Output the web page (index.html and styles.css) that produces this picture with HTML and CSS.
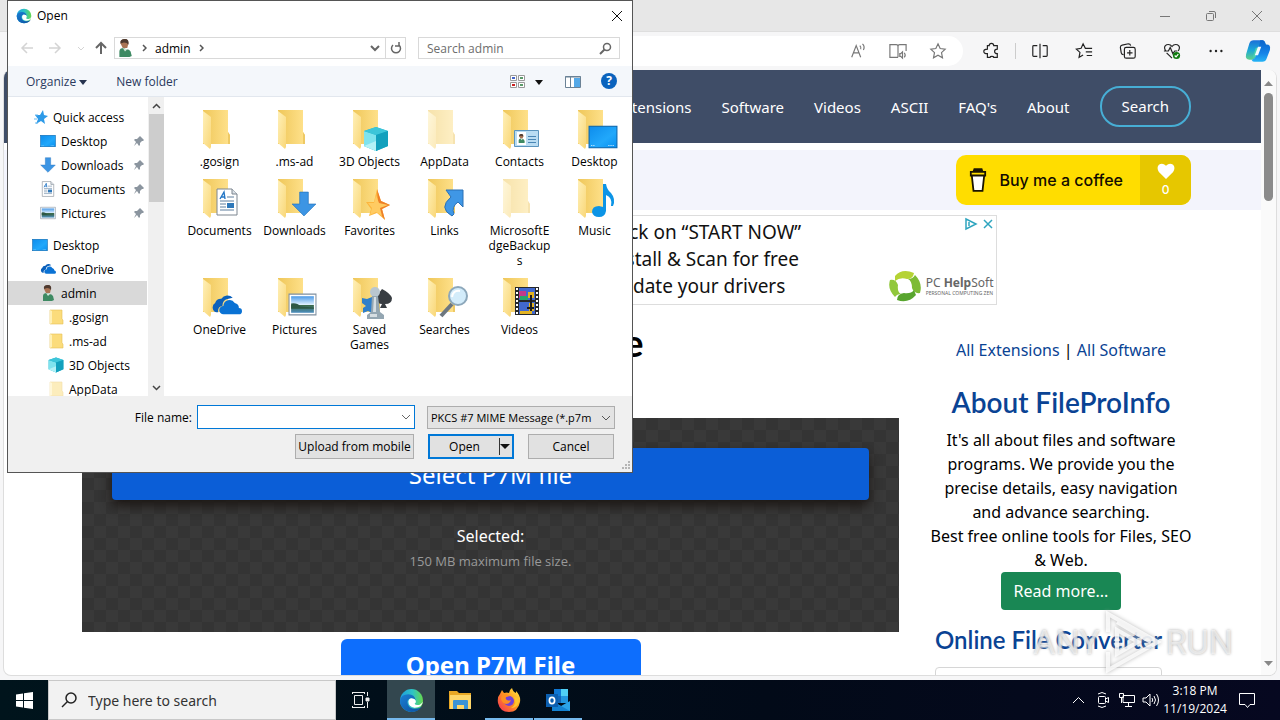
FILE: index.html
```html
<!DOCTYPE html>
<html lang="en">
  <head>
    <meta charset="utf-8">
    <title>P7M File</title>
    <link rel="stylesheet" href="styles.css">
  </head>
  <body>
    <!-- shared icons -->
    <svg class="sprite" aria-hidden="true">
      <defs>
        <linearGradient id="g-flap" x1="0" y1="0" x2="1" y2="1"><stop offset="0" stop-color="#fff0b8"/><stop offset="1" stop-color="#f9d778"/></linearGradient>
        <linearGradient id="g-back" x1="0" y1="0" x2="1" y2="0"><stop offset="0" stop-color="#efc75a"/><stop offset="1" stop-color="#ffe28d"/></linearGradient>
        <linearGradient id="g-screen" x1="0" y1="0" x2="1" y2="1"><stop offset="0" stop-color="#0d8cec"/><stop offset=".6" stop-color="#21a8fb"/><stop offset="1" stop-color="#0890f0"/></linearGradient>
        <linearGradient id="g-edge" x1="0" y1="0" x2="1" y2="0"><stop offset="0" stop-color="#1d9fe0"/><stop offset=".55" stop-color="#2fc3c4"/><stop offset="1" stop-color="#66d94c"/></linearGradient>
        <linearGradient id="g-edge2" x1="0" y1="0" x2="1" y2="1"><stop offset="0" stop-color="#1b7fd3"/><stop offset="1" stop-color="#0c4f9f"/></linearGradient>
        <linearGradient id="g-fox" x1="1" y1="0" x2="0" y2="1"><stop offset="0" stop-color="#fff04a"/><stop offset=".45" stop-color="#ff9a1e"/><stop offset="1" stop-color="#f5285a"/></linearGradient>
        <linearGradient id="g-cop1" x1="0" y1="0" x2="0" y2="1"><stop offset="0" stop-color="#1a6fd8"/><stop offset=".5" stop-color="#1aa7d8"/><stop offset="1" stop-color="#5fd08b"/></linearGradient>
        <linearGradient id="g-cop2" x1="0" y1="0" x2="0" y2="1"><stop offset="0" stop-color="#0b62c9"/><stop offset=".6" stop-color="#1583e8"/><stop offset="1" stop-color="#26b4f5"/></linearGradient>
        <linearGradient id="g-sky" x1="0" y1="0" x2="0" y2="1"><stop offset="0" stop-color="#4c9ae6"/><stop offset=".5" stop-color="#dcefff"/><stop offset=".55" stop-color="#3c6a4a"/><stop offset="1" stop-color="#4d8fc0"/></linearGradient>
      </defs>
      <symbol id="folder" viewBox="0 0 48 48">
        <path d="M7 4h25v22l2 3v9H7z" fill="url(#g-back)"/>
        <path d="M32 26l2 3v9h-2z" fill="#eec964"/>
        <path d="M7 5l8 6v30l-1 2-7-6z" fill="url(#g-flap)"/>
      </symbol>
      <symbol id="folder-small" viewBox="0 0 16 16">
        <path d="M2 1h12v9l1 1v4H2z" fill="#fbdc7b" stroke="#e5bf55" stroke-width=".6"/>
        <path d="M2 1l2 1v12l-2 1z" fill="#fff0b5"/>
      </symbol>
      <symbol id="desktop" viewBox="0 0 28 28">
        <rect x="1" y="4" width="26" height="20" fill="url(#g-screen)" stroke="#0c66ad"/>
        <path d="M3 22h3M19 22h6" stroke="#d8f0ff" stroke-dasharray="1 1"/>
      </symbol>
      <symbol id="down" viewBox="0 0 24 24">
        <path d="M8 1h8v11h7L12 23 1 12h7z" fill="#3c95e4" stroke="#2372bb" stroke-width=".6"/>
      </symbol>
      <symbol id="doc" viewBox="0 0 24 28">
        <path d="M2 1h15l5 5v21H2z" fill="#fff" stroke="#7d8690"/>
        <path d="M17 1v5h5" fill="#dce2e8" stroke="#7d8690"/>
        <path d="M5 11l4-7 1 7M6 9h4" fill="none" stroke="#2376c5" stroke-width="1.4"/>
        <path d="M12 9h7M5 13h14M5 16h6M5 19h6M5 22h14" stroke="#5f7f9e"/>
        <path d="M12 15h7v5h-7z" fill="#2f78b9"/>
      </symbol>
      <symbol id="picture" viewBox="0 0 28 24">
        <path d="M1 2h26v20H1z" fill="#fff" stroke="#7f8f9f"/>
        <path d="M3 4h22v16H3z" fill="url(#g-sky)"/>
        <path d="M3 11q6-1 9 3l13 1v1H3z" fill="#2d5845"/>
      </symbol>
      <symbol id="cube" viewBox="0 0 26 26">
        <path d="M13 1l12 4v15l-12 5-12-5V5z" fill="#1fb4cd"/>
        <path d="M1 5l12 4v16L1 20z" fill="#7fe3ee"/>
        <path d="M13 1l12 4-12 4L1 5z" fill="#3cc5d9"/>
        <path d="M13 9l12-4v15l-12 5z" fill="#12a0bd"/>
        <path d="M1 20l12-5v10z" fill="#b3f1f6"/>
      </symbol>
      <symbol id="cloud" viewBox="0 0 30 20">
        <path d="M5 17a5 5 0 0 1-1-9 6 6 0 0 1 6-4 7 7 0 0 1 11-1l-4 1q-6 1-6 7-5 1-4 6z" fill="#0b60bb"/>
        <path d="M12 19a4 4 0 0 1 0-8 6 6 0 0 1 11-3 5 5 0 0 1 4 5 3 3 0 0 1 0 6z" fill="#0a72d4"/>
      </symbol>
      <symbol id="person" viewBox="0 0 16 16">
        <path d="M4 4q0-4 4-4 3 0 3 4l-1 4H6z" fill="#a97455"/>
        <path d="M4 4q-1-4 4-4 4 0 3 5-1-2-4-2z" fill="#4d3a30"/>
        <path d="M3 16V11q0-3 4-3l2 1q3 0 4 2l1 4-2 1z" fill="#3e8a63"/>
        <path d="M6 8l2 3 2-2" fill="#d5e8dc"/>
      </symbol>
      <symbol id="pin" viewBox="0 0 12 12">
        <path d="M7 1l4 4-1 1-1 0-2 2 0 2-1 1-2-3-3 3 2-4-2-2 1-1h2l2-2z" fill="#8b959f"/>
      </symbol>
      <symbol id="edge" viewBox="0 0 24 24">
        <circle cx="12" cy="12" r="11" fill="url(#g-edge)"/>
        <path d="M1 12q1-6 8-6 6 0 7 6-1-2-4-2-4 0-4 4 1 6 7 6 4 0 7-2-4 5-10 5A11 11 0 0 1 1 12z" fill="url(#g-edge2)"/>
        <path d="M16 12q1 2-1 3 1 2 5 1 2-1 3-3-1 6-8 6-6-1-6-6 1-4 4-3 2 0 3 2z" fill="#fff" class="edge-gap"/>
      </symbol>
    </svg>

    <main class="browser">
      <div class="titlebar">
        <button class="win-btn" aria-label="Minimize"><svg width="12" height="12"><path d="M1 6.5h10"/></svg></button>
        <button class="win-btn" aria-label="Restore"><svg width="12" height="12"><rect x="1.500" y="3.500" width="7" height="7" rx="1"/><path d="M4 1.500h5q1.500 0 1.500 1.500v5"/></svg></button>
        <button class="win-btn" aria-label="Close"><svg width="12" height="12"><path d="M1 1l10 10M11 1L1 11"/></svg></button>
      </div>
      <div class="toolbar">
        <div class="address">
          <button class="addr-btn" aria-label="Read aloud"><svg viewBox="0 0 20 20"><path d="M3 17L8 4l5 13M5 12h6M12 4q2 2 1 4M15 2q3 3 1 7"/></svg></button>
          <button class="addr-btn" aria-label="Immersive reader"><svg viewBox="0 0 20 20"><path d="M10 17H1V3h7q2 0 2 2v12M10 5q0-2 2-2h7v7M12 13h1l2-2v7l-2-2h-1zM17 12q2 3 0 5"/></svg></button>
          <button class="addr-btn" aria-label="Add to favorites"><svg viewBox="0 0 20 20"><path d="M10 2l2.400 5.200 5.600.7-4.100 3.900 1.100 5.700-5-2.800-5 2.800 1.100-5.700L2 7.900l5.600-.7z"/></svg></button>
        </div>
        <button class="tool-btn" aria-label="Extensions"><svg viewBox="0 0 20 20"><path d="M6 4h2q0-2.500 2.500-2.500T13 4h4v4q-3 0-3 2.500t3 2.500v4h-4q0-1-2-1t-2 1H6v-4q-4 0-4-2.500T6 8z"/></svg></button>
        <span class="divider"></span>
        <button class="tool-btn" aria-label="Split screen"><svg viewBox="0 0 20 20"><path d="M7 4H3q-1 0-1 1v10q0 1 1 1h4M13 4h4q1 0 1 1v10q0 1-1 1h-4M10 2v16"/></svg></button>
        <button class="tool-btn" aria-label="Favorites"><svg viewBox="0 0 20 20"><path d="M12 7h-.5L9 2 6.800 7 1.500 8l4 3.500L4.500 17 9 14.500M12 7h7M12 11h7M13 15h6"/></svg></button>
        <button class="tool-btn" aria-label="Collections"><svg viewBox="0 0 20 20"><path d="M5 14q-2 0-2.500-2L1.500 6q0-2 2-2.500l7-1.500q2 0 2.500 2M8 6h8q2 0 2 2v8q0 2-2 2H8q-2 0-2-2V8q0-2 2-2zM12 9v6M9 12h6"/></svg></button>
        <button class="tool-btn" aria-label="Browser essentials"><svg viewBox="0 0 20 20"><path d="M3 10Q0 5 4 3q4-1 6 2 2-3 6-2 4 2 1 7M1 10h5l2-4 3 7 2-3h3M4 12l6 6"/><circle class="ok" cx="15" cy="15" r="4"/><path class="tick" d="M13 15l1.500 1.500L17 13.500"/></svg></button>
        <button class="tool-btn" aria-label="More"><svg viewBox="0 0 20 20"><g class="dots"><circle cx="4" cy="10" r="1.300"/><circle cx="10" cy="10" r="1.300"/><circle cx="16" cy="10" r="1.300"/></g></svg></button>
        <button class="copilot" aria-label="Copilot"><svg viewBox="0 0 24 24"><path d="M8 2h8q2 0 3 3l1 3h-4q-3 0-4 3l-2 6q-1 3-4 3H4q-4 0-3-5L4 5q1-3 4-3z" fill="url(#g-cop1)"/><path d="M14 2h2q2 0 3 4h1q4 0 3 5l-3 8q-1 3-4 3H9q-2 0-3-2 3 0 4-4l3-9q1-3 1-5z" fill="url(#g-cop2)"/><path d="M10 9h3l-3 8q-1 2-3 1z" fill="#48d0b0"/><path d="M12 8h3l-3 8H9z" fill="#f3fbff"/></svg></button>
      </div>

      <div class="viewport">
        <div class="page">
          <header class="site-header">
            <nav>
              <a href="#">Extensions</a>
              <a href="#">Software</a>
              <a href="#">Videos</a>
              <a href="#">ASCII</a>
              <a href="#">FAQ's</a>
              <a href="#">About</a>
            </nav>
            <a class="search-link" href="#">Search</a>
          </header>
          <div class="support-bar">
            <a class="coffee" href="#">
              <span class="coffee-main">
                <svg viewBox="0 0 20 28" width="18" height="26"><path d="M3 8l2 18h10l2-18z" fill="#fff" stroke="#1a1400" stroke-width="2"/><path d="M2 5h16v4H2zM5 5l1-3h8l1 3M5 3h9" fill="#fd0" stroke="#1a1400" stroke-width="2"/></svg>
                Buy me a coffee
              </span>
              <span class="coffee-count">
                <svg viewBox="0 0 20 18" width="18" height="16"><path d="M10 18L2 10Q-1 5 2 2q4-3 8 1 4-4 8-1 3 3 0 8z" fill="#fff"/></svg>
                0
              </span>
            </a>
          </div>
          <a class="ad" href="#">
            <span class="ad-steps">
              <span>1. Click on “START NOW”</span>
              <span>2. Install &amp; Scan for free</span>
              <span>3. Update your drivers</span>
            </span>
            <span class="ad-side">
              <svg width="30" height="14" viewBox="0 0 30 14" fill="none" stroke="#2fa5bf" stroke-width="1.500"><path d="M2 2l10 5-10 5zM5 5v4"/><path d="M20 3l8 8M28 3l-8 8"/></svg>
              <span class="ad-brand">
                <svg width="34" height="34" viewBox="0 0 34 34"><path d="M7 7Q14-1 26 4q-1 6-7 6-7-2-12 2z" fill="#b5d334"/><path d="M27 6q8 8 5 18-6 1-8-5 0-7-4-9 5 0 7-4z" fill="#7dbb35"/><path d="M28 26q-8 9-19 5 0-6 7-7 7 1 10-3 1 3 2 5z" fill="#58a52e"/><path d="M7 28q-8-8-5-17 6-1 8 5-1 7 3 9-4 0-6 3z" fill="#91c83c"/></svg>
                <span class="brand-text"><span>PC <b>Help</b>Soft</span><small>PERSONAL COMPUTING ZEN</small></span>
              </span>
            </span>
          </a>
          <div class="columns">
            <section class="converter">
              <h1>Open P7M Online</h1>
              <div class="dropzone">
                <button class="select-file">Select P7M file</button>
                <p>Selected:</p>
                <small>150 MB maximum file size.</small>
              </div>
              <button class="open-file">Open P7M File</button>
            </section>
            <aside>
              <p class="links"><a href="#">All Extensions</a> | <a href="#">All Software</a></p>
              <h2>About FileProInfo</h2>
              <p>It's all about files and software programs. We provide you the precise details, easy navigation and advance searching.<br>Best free online tools for Files, SEO &amp; Web.</p>
              <a class="read-more" href="#">Read more...</a>
              <h3>Online File Converter</h3>
              <div class="card"></div>
            </aside>
          </div>
        </div>
        <div class="page-scroll">
          <svg width="9" height="5"><path d="M0 5l4.500-5L9 5z"/></svg>
          <span class="thumb"></span>
          <svg width="9" height="5"><path d="M0 0l4.500 5L9 0z"/></svg>
        </div>
      </div>
    </main>

    <div class="watermark">
      <span>ANY</span>
      <svg width="58" height="64" viewBox="0 0 58 64"><path d="M4 22V4l50 28L4 60V42M13 20v24l21-12zM13 12l34 20"/></svg>
      <span>RUN</span>
    </div>

    <!-- file picker -->
    <form class="dialog" role="dialog" aria-label="Open">
      <div class="dialog-title">
        <svg width="16" height="16"><use href="#edge"/></svg>
        <span>Open</span>
        <button type="button" aria-label="Close"><svg width="12" height="12"><path d="M1 1l10 10M11 1L1 11" stroke="#111"/></svg></button>
      </div>
      <div class="nav-row">
        <button type="button" class="nav-btn" aria-label="Back"><svg width="14" height="12"><path d="M13 6H2M7 1L2 6l5 5" stroke="#d4d4d4" stroke-width="1.500"/></svg></button>
        <button type="button" class="nav-btn" aria-label="Forward"><svg width="14" height="12"><path d="M1 6h11M7 1l5 5-5 5" stroke="#d4d4d4" stroke-width="1.500"/></svg></button>
        <button type="button" class="nav-btn recent" aria-label="Recent locations"><svg width="6" height="5"><path d="M0 1l3 3 3-3" stroke="#d4d4d4"/></svg></button>
        <button type="button" class="nav-btn up" aria-label="Up"><svg width="12" height="14"><path d="M6 13V2M1 7l5-5 5 5" stroke="#666" stroke-width="2"/></svg></button>
        <div class="path">
          <svg width="18" height="18"><use href="#person"/></svg>
          <svg class="crumb" width="5" height="8"><path d="M1 1l3 3-3 3" stroke="#555" stroke-width="1.500"/></svg>
          <span>admin</span>
          <svg class="crumb" width="5" height="8"><path d="M1 1l3 3-3 3" stroke="#555" stroke-width="1.500"/></svg>
          <button type="button" class="path-drop" aria-label="Previous locations"><svg width="10" height="7"><path d="M1 1l4 4 4-4" stroke="#666" stroke-width="2"/></svg></button>
          <button type="button" class="path-reload" aria-label="Refresh"><svg width="12" height="12"><path d="M9 3a4.500 4.500 0 1 1-6 0M3 0v4h4" stroke="#666" stroke-width="1.500" transform="matrix(-1 0 0 1 12 0)"/></svg></button>
        </div>
        <label class="search-box">
          <input type="text" placeholder="Search admin" aria-label="Search admin">
          <svg width="13" height="13"><circle cx="8" cy="5" r="3.500" stroke="#666" stroke-width="1.500"/><path d="M5.500 7.500L1 12" stroke="#666" stroke-width="2"/></svg>
        </label>
      </div>
      <div class="command-bar">
        <button type="button" class="organize">Organize <svg width="8" height="5"><path d="M0 0h8L4 5z" fill="#26334f"/></svg></button>
        <button type="button">New folder</button>
        <span class="command-right">
          <button type="button" aria-label="Change your view"><svg width="16" height="14"><path d="M.5.5h6v5h-6zM8.500.5h6v5h-6zM.5 7.500h6v5h-6zM8.500 7.500h6v5h-6z" fill="#fff" stroke="#9a9a9a"/><path d="M2 3h3" stroke="#4466cc" stroke-width="2"/><path d="M10 3h3M10 10h3" stroke="#5a9a6a" stroke-width="2"/><path d="M2 10h3" stroke="#c22" stroke-width="2"/></svg></button>
          <button type="button" aria-label="More views"><svg width="8" height="5"><path d="M0 0h8L4 5z" fill="#111"/></svg></button>
          <button type="button" aria-label="Preview pane"><svg width="16" height="12"><path d="M.5.5h15v11H.5z" fill="#fff" stroke="#6b8296"/><path d="M9 2h6v9H9z" fill="#55a9e8"/><path d="M0 1h16M5.500 1v10" stroke="#6b8296"/></svg></button>
          <button type="button" class="help" aria-label="Help">?</button>
        </span>
      </div>
      <div class="dialog-body">
        <div class="tree">
          <ul>
            <li><svg><path d="M11 1l1 5 4 1-4 3 1 5-4-3-5 3 2-5-3-4 5 0z" fill="#2d9ae8"/><path d="M3 6h3M2 10h3M3 14h3" stroke="#6bb9ef"/></svg>Quick access</li>
            <li class="l2"><svg><use href="#desktop"/></svg>Desktop<svg class="pin"><use href="#pin"/></svg></li>
            <li class="l2"><svg><use href="#down"/></svg>Downloads<svg class="pin"><use href="#pin"/></svg></li>
            <li class="l2"><svg><use href="#doc"/></svg>Documents<svg class="pin"><use href="#pin"/></svg></li>
            <li class="l2"><svg><use href="#picture"/></svg>Pictures<svg class="pin"><use href="#pin"/></svg></li>
            <li class="root"><svg><use href="#desktop"/></svg>Desktop</li>
            <li class="l2"><svg><use href="#cloud"/></svg>OneDrive</li>
            <li class="l2 selected"><svg><use href="#person"/></svg>admin</li>
            <li class="l3"><svg><use href="#folder-small"/></svg>.gosign</li>
            <li class="l3"><svg><use href="#folder-small"/></svg>.ms-ad</li>
            <li class="l3"><svg><use href="#cube"/></svg>3D Objects</li>
            <li class="l3"><svg class="faded"><use href="#folder-small"/></svg>AppData</li>
          </ul>
          <div class="tree-scroll">
            <svg width="9" height="6"><path d="M1 5l3.500-3.500L8 5"/></svg>
            <span class="thumb"></span>
            <svg width="9" height="6"><path d="M1 1l3.500 3.500L8 1"/></svg>
          </div>
        </div>
        <ul class="files">
          <li><svg viewBox="0 0 48 48"><use href="#folder"/></svg>.gosign</li>
          <li><svg viewBox="0 0 48 48"><use href="#folder"/></svg>.ms-ad</li>
          <li><svg viewBox="0 0 48 48"><use href="#folder"/><use href="#cube" x="17" y="20" width="26" height="26"/></svg>3D Objects</li>
          <li><svg viewBox="0 0 48 48" class="faded"><use href="#folder"/></svg>AppData</li>
          <li><svg viewBox="0 0 48 48"><use href="#folder"/><path d="M18.500 24.500h24v16h-24z" fill="#b9dcf2" stroke="#5b94bd"/><path d="M21 26h9v13h-9z" fill="#fff"/><use href="#person" x="21" y="27" width="9" height="11"/><path d="M32 30.500h8M32 33.500h8M32 36.500h8" stroke="#4a86b5"/></svg>Contacts</li>
          <li><svg viewBox="0 0 48 48"><use href="#folder"/><use href="#desktop" x="17" y="16" width="30" height="30"/></svg>Desktop</li>
          <li><svg viewBox="0 0 48 48"><use href="#folder"/><use href="#doc" x="19" y="12" width="24" height="30"/></svg>Documents</li>
          <li><svg viewBox="0 0 48 48"><use href="#folder"/><use href="#down" x="20" y="16" width="26" height="26"/></svg>Downloads</li>
          <li><svg viewBox="0 0 48 48"><use href="#folder"/><path d="M31 14l4 12 9 4-8 4 3 11-8-7-8 3 2-7-5-7 8 0z" fill="#fcb63e"/><path d="M31 14l4 12 9 4-8 4 3 11-6-8-1-10z" fill="#ee7f27"/><path d="M30 20l3 8 9 2-8 3 2 8-6-4-6 3 2-7-4-5 6 0z" fill="#ffcb62"/></svg>Favorites</li>
          <li><svg viewBox="0 0 48 48"><use href="#folder"/><path d="M25 15h17v17l-5-5q-7 5-4 12l-2 2q-14-8-1-19z" fill="#3f97e6" stroke="#2b71b6"/></svg>Links</li>
          <li><svg viewBox="0 0 48 48" class="faded"><use href="#folder"/></svg>MicrosoftE<br>dgeBackup<br>s</li>
          <li><svg viewBox="0 0 48 48"><use href="#folder"/><path d="M32 9h3q1 6 5 9 5 6 2 13h-2q2-8-5-11v16q-1 6-7 6t-7-5q0-6 7-6l4 1z" fill="#0c94e6"/></svg>Music</li>
          <li><svg viewBox="0 0 48 48"><use href="#folder"/><use href="#cloud" x="15" y="20" width="31" height="22"/></svg>OneDrive</li>
          <li><svg viewBox="0 0 48 48"><use href="#folder"/><use href="#picture" x="17" y="18" width="29" height="25"/></svg>Pictures</li>
          <li><svg viewBox="0 0 48 48"><use href="#folder"/><path d="M36 15q-4 4-5 9 0 6 5 6l-2 4h7l-2-4q7 0 7-6-2-5-10-9z" fill="#383d42"/><path d="M16 24l5 1 5-2v16l-4-2-5 2v-5l3-2-4-3z" fill="#2f7fca"/><circle cx="29" cy="18" r="5" fill="#b9c6cf"/><path d="M26 22h6l2 16 4 3v4H21v-4l4-3z" fill="#94a6b2"/><path d="M28 23h2v15h-3zM24 40h7v3h-7z" fill="#d6dee3"/></svg>Saved Games</li>
          <li><svg viewBox="0 0 48 48"><use href="#folder"/><path d="M31 30L20 42" stroke="#6d7780" stroke-width="4"/><circle cx="37" cy="22" r="9" fill="#d3ecfa" stroke="#8da8bb" stroke-width="2"/><path d="M31 23q1-7 8-6" stroke="#fff" stroke-width="2" fill="none"/></svg>Searches</li>
          <li><svg viewBox="0 0 48 48"><use href="#folder"/><path d="M19 13h24v28H19z" fill="#26282b"/><path d="M23 14h16v12H23zM23 28h16v12H23z" fill="#4168cf"/><path d="M23 17h7v7h-7z" fill="#c23b8b"/><path d="M24 22h8v4h-8z" fill="#27a66c"/><path d="M32 18h6v6h-6zM33 29h5v8h-5zM24 37h12v3H24z" fill="#e3b322"/><path d="M35 21v16M31 34h7" stroke="#1c1c1c" stroke-width="2"/><path d="M21 14v27M41 14v27" stroke="#fff" stroke-width="2" stroke-dasharray="2 2"/></svg>Videos</li>
        </ul>
      </div>
      <div class="dialog-footer">
        <div class="name-row">
          <label for="file-name">File name:</label>
          <span class="combo">
            <input type="text" id="file-name">
            <svg width="10" height="7"><path d="M1 1l4 4 4-4" stroke="#666"/></svg>
          </span>
          <span class="type">
            <select aria-label="File type"><option>PKCS #7 MIME Message (*.p7m</option></select>
            <svg width="10" height="7"><path d="M1 1l4 4 4-4" stroke="#555"/></svg>
          </span>
        </div>
        <div class="button-row">
          <button type="button" class="upload">Upload from mobile</button>
          <span class="split">
            <button type="button">Open</button>
            <button type="button" class="arrow" aria-label="Open options"><svg width="10" height="5"><path d="M0 0h10L5 5z" fill="#111"/></svg></button>
          </span>
          <button type="button" class="cancel">Cancel</button>
        </div>
        <svg class="grip" width="10" height="10"><path d="M8 2h2M5 5h2M8 5h2M2 8h2M5 8h2M8 8h2" stroke="#b5b5b5" stroke-width="2"/></svg>
      </div>
    </form>

    <footer class="taskbar">
      <button class="start" aria-label="Start"><svg width="17" height="17"><path d="M0 2.500l7-1v6.500H0zM8 1.300l9-1.300v8H8zM0 9h7v6.500l-7-1zM8 9h9v8l-9-1.300z" fill="#fff"/></svg></button>
      <label class="task-search">
        <svg width="18" height="18"><circle cx="11" cy="7" r="5" stroke="#222" stroke-width="1.500"/><path d="M7.500 10.500L2 16" stroke="#222" stroke-width="1.500"/></svg>
        <input type="text" placeholder="Type here to search" aria-label="Type here to search">
      </label>
      <button class="task" aria-label="Task view"><svg width="18" height="18" fill="none" stroke="#eee"><path d="M1 1.500h11M1 16.500h11M2.500 4.500h8v9h-8zM.500 1v2M12.500 1v2M.500 15v2M12.500 15v2M15.500 1v4M15.500 11v6"/><path d="M14 7h3v3h-3z" fill="#eee"/></svg></button>
      <button class="task active" aria-label="Microsoft Edge"><svg width="25" height="25"><use href="#edge"/></svg></button>
      <button class="task" aria-label="File Explorer"><svg width="23" height="20" viewBox="0 0 23 20"><path d="M0 1h8l2 2h12v16H0z" fill="#e9a825"/><path d="M1 5h21v14H1z" fill="#ffd76a"/><path d="M4 11q0-1 1-1h13q1 0 1 1v8h-4v-4H8v4H4z" fill="#3a93d6"/></svg></button>
      <button class="task open" aria-label="Firefox"><svg width="24" height="24" viewBox="0 0 24 24"><path d="M3 6l2-4 2 3q3-1 5 0 0-3 3-5 1 4 4 5 0-1 0-2 5 5 4 11-2 10-11 10T1 15Q0 9 3 6z" fill="url(#g-fox)"/><circle cx="12" cy="13" r="5" fill="#7141d8"/><path d="M5 7q5-2 8 1l-4 1q-1 2 1 3 2 1 4 0-1 4-5 4-4-1-5-5z" fill="#ff8f22"/><path d="M17 9q4 7-3 11 7 0 8-7-1-4-5-4z" fill="#ffc62c"/></svg></button>
      <button class="task open" aria-label="Outlook"><svg width="24" height="22" viewBox="0 0 24 22"><path d="M8 0h14v14H8z" fill="#1466b8"/><path d="M15 0h7v7h-7z" fill="#50d0f5"/><path d="M8 0h7v7H8z" fill="#0f78d4"/><path d="M15 7h7v7h-7z" fill="#2397e0"/><path d="M6 12l9 5 9-5v10H6z" fill="#2ba3e8"/><path d="M6 12l18 10H6z" fill="#1482d2"/><path d="M0 5h12v13H0z" fill="#0c5fb0"/><ellipse cx="6" cy="11.500" rx="2.600" ry="3.200" fill="none" stroke="#fff" stroke-width="1.700"/></svg></button>
      <div class="tray">
        <svg><path d="M3 12l5.500-5.500L14 12"/></svg>
        <svg><rect x="4.500" y="5.500" width="7" height="7" rx="1"/><path d="M11.500 8l3-1.500v5l-3-1.500M4 3q4-3 8 0M4 15q4 3 8 0"/></svg>
        <svg><path d="M5 4.500h11.500v7H5zM10.500 12v3.500M7 15.500h7M1.500 2.500h4v4h-4zM3.500 7v5"/></svg>
        <svg><path d="M1 7h3l4-4v12l-4-4H1zM10 7q1.500 2 0 4M12 5q3 4 0 8M14.500 3q4 6 0 12"/></svg>
        <time>3:18 PM<br>11/19/2024</time>
        <button aria-label="Notifications"><svg><path d="M1.500 2.500h15v11H12l-2.500 3-2.500-3H1.500z"/></svg></button>
      </div>
    </footer>
  </body>
</html>
```

FILE: styles.css
```css
* {
  box-sizing: border-box;
}
body {
  margin: 0;
  height: 100vh;
  display: flex;
  flex-direction: column;
  overflow: hidden;
  position: relative;
  font-family: "Noto Sans", "Open Sans", sans-serif;
  font-size: 16px;
  color: #000;
}
button,
input,
select {
  font: inherit;
  color: inherit;
}
button {
  border: none;
  background: none;
  padding: 0;
}
a {
  text-decoration: none;
}
ul {
  list-style: none;
  margin: 0;
  padding: 0;
}
.sprite {
  position: absolute;
  width: 0;
  height: 0;
}

/* browser */
.browser {
  flex: 1;
  min-height: 0;
  display: flex;
  flex-direction: column;
  background: #f6f6f7;
}
.titlebar {
  height: 32px;
  background: #e7e7e7;
  display: flex;
  justify-content: flex-end;
  border-bottom: 1px solid #dedede;
}
.win-btn {
  width: 46px;
}
.win-btn svg {
  fill: none;
  stroke: #777;
}
.toolbar {
  height: 38px;
  display: flex;
  align-items: center;
}
.address {
  flex: 1;
  height: 30px;
  margin: 0 6px 0 40px;
  padding-right: 5px;
  border-radius: 15px;
  background: #fff;
  display: flex;
  justify-content: flex-end;
}
.addr-btn,
.tool-btn,
.copilot {
  display: flex;
  align-items: center;
  justify-content: center;
}
.addr-btn {
  width: 40px;
}
.tool-btn {
  width: 44px;
}
.addr-btn svg,
.tool-btn svg {
  width: 18px;
  height: 18px;
  fill: none;
  stroke: #222;
  stroke-width: 1.3;
}
.addr-btn svg {
  stroke: #777;
}
.tool-btn .dots {
  fill: #222;
  stroke: none;
}
.tool-btn .ok {
  fill: #0f7b0f;
  stroke: none;
}
.tool-btn .tick {
  stroke: #fff;
}
.divider {
  width: 1px;
  height: 16px;
  margin: 0 2px;
  background: #ccc;
}
.copilot {
  width: 40px;
  margin-right: 2px;
}
.copilot svg {
  width: 26px;
  height: 26px;
}
.viewport {
  flex: 1;
  min-height: 0;
  margin: 0 3px 4px;
  display: flex;
  border: 1px solid #ddd;
  border-top: none;
  border-radius: 8px;
  overflow: hidden;
  background: #fff;
}
.page {
  flex: 1;
  overflow: hidden;
}
.page-scroll {
  width: 15px;
  padding: 11px 0 9px;
  display: flex;
  flex-direction: column;
  align-items: center;
  background: #fafafa;
}
.page-scroll svg {
  fill: #888;
}
.page-scroll .thumb {
  width: 9px;
  height: 108px;
  margin: 7px 0 auto;
  border-radius: 5px;
  background: #8b8b8b;
}

/* site */
.site-header {
  height: 73px;
  padding: 0 70px 0 78px;
  display: flex;
  align-items: center;
  justify-content: flex-end;
  gap: 30px;
  background: #3f4d67;
  font-size: 15px;
}
.site-header nav {
  display: flex;
  gap: 30px;
}
.site-header a {
  color: #fff;
}
.site-header .search-link {
  padding: 8px 20px;
  line-height: 21px;
  border: 2px solid #47aed5;
  border-radius: 20px;
}
.support-bar {
  margin: 7px 0 5px;
  padding: 5px 70px;
  display: flex;
  justify-content: flex-end;
  background: #f3f4fc;
}
.coffee {
  height: 50px;
  display: flex;
  border-radius: 10px;
  overflow: hidden;
  background: #fd0;
  color: #120c00;
  font-family: Inter, sans-serif;
  font-weight: 500;
}
.coffee-main {
  padding: 0 17px 0 13px;
  display: flex;
  align-items: center;
  gap: 12px;
}
.coffee-count {
  width: 51px;
  display: flex;
  flex-direction: column;
  align-items: center;
  justify-content: center;
  gap: 3px;
  background: #e6c700;
  color: #fff;
  font-size: 12px;
  line-height: 16px;
}
.ad {
  width: 728px;
  height: 90px;
  margin: 0 auto;
  display: flex;
  justify-content: space-between;
  border: 1px solid #ddd;
  color: #111;
}
.ad-steps {
  padding: 3px 0 0 317px;
  display: flex;
  flex-direction: column;
  white-space: nowrap;
  font-size: 19px;
  line-height: 27px;
}
.ad-side {
  padding: 1px 2px 1px 0;
  display: flex;
  flex-direction: column;
  align-items: flex-end;
  justify-content: space-between;
}
.ad-brand {
  display: flex;
  align-items: center;
  gap: 4px;
}
.brand-text {
  display: flex;
  flex-direction: column;
  white-space: nowrap;
  color: #666;
  font-size: 12px;
  line-height: 14px;
}
.brand-text small {
  font-size: 5px;
  line-height: 6px;
}
.columns {
  padding: 19px 69px 0 78px;
  display: flex;
  gap: 31px;
}
.converter {
  flex: 1;
  display: flex;
  flex-direction: column;
  align-items: center;
}
h1 {
  margin: 0 0 58px;
  font-size: 38px;
  line-height: 36px;
  font-family: Lato, sans-serif;
}
.dropzone {
  align-self: stretch;
  height: 214px;
  margin-bottom: 7px;
  padding: 30px;
  text-align: center;
  color: #fff;
  background: repeating-conic-gradient(#343434 0 25%, #393939 0 50%) 0 0 / 24px 24px;
}
.select-file {
  width: 100%;
  height: 52px;
  border-radius: 4px;
  background: #0b5ed7;
  box-shadow: 0 6px 12px #1c1714;
  font-size: 24px;
}
.dropzone p {
  margin: 25px 0 2px;
}
.dropzone small {
  font-family: "Open Sans", sans-serif;
  font-size: 13px;
  color: #999;
}
.open-file {
  width: 300px;
  height: 50px;
  border-radius: 6px;
  background: #0d6efd;
  color: #fff;
  font-size: 24px;
  font-weight: bold;
}
aside {
  width: 262px;
  padding-top: 14px;
  text-align: center;
  line-height: 24px;
}
aside p {
  margin: 0;
}
aside a {
  color: #0a4394;
}
aside h2,
aside h3 {
  font-family: Lato, sans-serif;
  font-weight: 600;
  color: #0a4394;
}
aside h2 {
  margin: 24px 0 9px;
  font-size: 28px;
  line-height: 33px;
}
aside h3 {
  margin: 14px 0 11px 5px;
  text-align: left;
  font-size: 24px;
  line-height: 32px;
}
aside .read-more {
  display: inline-block;
  padding: 7px 13px;
  border-radius: 4px;
  background: #198754;
  color: #fff;
}
.card {
  width: 227px;
  height: 40px;
  margin-left: 5px;
  border: 1px solid #d6d6d6;
  border-radius: 4px;
}
.watermark {
  position: absolute;
  right: 47px;
  bottom: 46px;
  display: flex;
  align-items: center;
  gap: 4px;
  font-family: Roboto, sans-serif;
  font-size: 34px;
  color: #fff9;
  text-shadow: 0 0 3px #aaa;
}
.watermark svg {
  fill: none;
  stroke: #fffc;
  stroke-width: 4;
  filter: drop-shadow(0 0 2px #aaa);
}

/* open dialog */
.dialog {
  position: absolute;
  left: 7px;
  top: 0;
  width: 626px;
  height: 473px;
  display: flex;
  flex-direction: column;
  border: 1px solid #555;
  background: #fff;
  font-family: "Open Sans", "Noto Sans", sans-serif;
  font-size: 12px;
}
.dialog svg {
  fill: none;
  flex: none;
}
.dialog-title {
  height: 29px;
  padding: 0 9px 0 8px;
  display: flex;
  align-items: center;
  gap: 5px;
}
.dialog-title button {
  margin-left: auto;
}
.dialog-title button svg,
.nav-row button svg {
  display: block;
}
.nav-row {
  height: 36px;
  padding: 0 12px;
  display: flex;
  align-items: center;
}
.nav-btn {
  width: 28px;
}
.nav-btn.recent {
  width: 16px;
  padding-left: 2px;
}
.nav-btn.up {
  width: 22px;
  padding-left: 3px;
}
.path {
  flex: 1;
  height: 22px;
  padding-left: 1px;
  display: flex;
  align-items: center;
  border: 1px solid #d9d9d9;
}
.path .crumb {
  margin: 0 8px;
}
.path button {
  display: flex;
  align-items: center;
  justify-content: center;
  width: 20px;
  height: 20px;
}
.path-drop {
  margin-left: auto;
}
.path .path-reload {
  border-left: 1px solid #d9d9d9;
}
.search-box {
  width: 202px;
  height: 22px;
  margin-left: 12px;
  padding: 0 7px 0 8px;
  display: flex;
  align-items: center;
  border: 1px solid #d9d9d9;
}
.search-box input,
.task-search input {
  flex: 1;
  min-width: 0;
  padding: 0;
  border: none;
  outline: none;
  background: none;
}
.search-box input::placeholder {
  color: #6d6d6d;
}
.command-bar {
  height: 31px;
  padding: 0 15px 0 18px;
  display: flex;
  align-items: center;
  gap: 29px;
  border-bottom: 1px solid #e2e7ee;
  background: #f4f7fb;
  color: #2b3a5e;
}
.command-bar button svg {
  vertical-align: middle;
}
.command-right {
  margin-left: auto;
  display: flex;
  align-items: center;
  gap: 20px;
}
.command-right button:nth-child(2) {
  margin: 0 2px 0 -11px;
}
.help {
  width: 16px;
  height: 16px;
  border-radius: 50%;
  background: #0b63bd;
  color: #fff;
  font-weight: bold;
  line-height: 16px;
}
.dialog-body {
  flex: 1;
  min-height: 0;
  display: flex;
  overflow: hidden;
}
.tree {
  width: 156px;
  display: flex;
}
.tree ul {
  flex: 1;
  padding-top: 8px;
}
.tree li {
  height: 24px;
  margin-right: 1px;
  padding: 0 2px 0 24px;
  display: flex;
  align-items: center;
  gap: 5px;
  white-space: nowrap;
}
.tree li.root {
  margin-top: 8px;
}
.tree li.l2 {
  padding-left: 32px;
}
.tree li.l3 {
  padding-left: 40px;
}
.tree li svg {
  width: 16px;
  height: 16px;
}
.tree li .pin {
  width: 12px;
  height: 12px;
  margin-left: auto;
}
.tree .selected {
  background: #d9d9d9;
}
.faded {
  opacity: .5;
}
.tree-scroll {
  width: 16px;
  padding: 6px 0 5px;
  display: flex;
  flex-direction: column;
  align-items: center;
  background: #f0f0f0;
}
.tree-scroll svg {
  stroke: #444;
  stroke-width: 1.5;
}
.tree-scroll .thumb {
  width: 15px;
  height: 88px;
  margin: 5px 0 auto;
  background: #cdcdcd;
}
.files {
  flex: 1;
  padding: 9px 0 0 18px;
  display: grid;
  grid-template-columns: repeat(6, 1fr);
  align-content: start;
  row-gap: 6px;
  line-height: 15px;
  text-align: center;
}
.files li {
  padding: 0 4px;
}
.files svg {
  display: block;
  width: 48px;
  height: 48px;
  margin: 0 auto;
}
.dialog-footer {
  position: relative;
  height: 76px;
  padding: 9px 17px 0 8px;
  background: #f0f0f0;
}
.name-row,
.button-row {
  display: flex;
  justify-content: flex-end;
  align-items: center;
}
.combo,
.type {
  position: relative;
  display: flex;
}
.combo {
  width: 218px;
  height: 24px;
  margin: 0 12px 0 5px;
}
.combo input {
  width: 100%;
  padding: 0 20px 0 4px;
  border: 1px solid #0078d7;
  background: #fff;
}
.type {
  width: 188px;
  height: 23px;
}
.type select {
  width: 100%;
  padding: 0 14px 0 3px;
  appearance: none;
  border: 1px solid #adadad;
  border-radius: 0;
  background: #e3e3e3;
  font-size: 11px;
}
.combo svg,
.type svg {
  position: absolute;
  right: 4px;
  top: 9px;
}
.button-row {
  margin: 5px 1px 0 0;
}
.button-row > button,
.split {
  height: 25px;
  border: 1px solid #adadad;
  background: #e1e1e1;
}
.upload {
  width: 119px;
}
.cancel {
  width: 86px;
}
.split {
  width: 86px;
  margin: 0 14px;
  display: flex;
  align-items: center;
  border: 2px solid #0078d7;
}
.split button {
  flex: 1;
  height: 17px;
  line-height: 17px;
}
.split .arrow {
  flex: none;
  width: 13px;
  border-left: 1px solid #333;
  display: flex;
  align-items: center;
}
.grip {
  position: absolute;
  right: 2px;
  bottom: 2px;
}

/* taskbar */
.taskbar {
  height: 40px;
  display: flex;
  background: linear-gradient(90deg, #00141c, #020a18 60%, #060820);
}
.start {
  width: 48px;
}
.start svg {
  display: block;
  margin: 0 auto;
}
.task-search {
  width: 288px;
  padding: 0 11px;
  display: flex;
  align-items: center;
  gap: 10px;
  border: 1px solid #c8c8c8;
  background: #f2f2f2;
  font-size: 14px;
}
.task-search svg {
  fill: none;
}
.task-search input::placeholder {
  color: #333;
}
.task {
  width: 48px;
  margin-right: 1px;
  padding-top: 2px;
  display: flex;
  align-items: center;
  justify-content: center;
  border-bottom: 2px solid transparent;
}
.task:nth-of-type(2) {
  width: 50px;
}
.task.active {
  background: #33474f;
}
.task.active,
.task.open {
  border-bottom-color: #76b9ed;
}
.task .edge-gap {
  fill: #33474f;
}
.tray {
  margin-left: auto;
  padding-right: 24px;
  display: flex;
  align-items: center;
  gap: 6px;
  color: #fff;
}
.tray svg {
  display: block;
  width: 18px;
  height: 18px;
  fill: none;
  stroke: #fff;
}
.tray time {
  width: 58px;
  margin-right: 8px;
  display: flex;
  justify-content: center;
  text-align: center;
  white-space: nowrap;
  font-family: "Open Sans", sans-serif;
  font-size: 12px;
  line-height: 18px;
}
```
